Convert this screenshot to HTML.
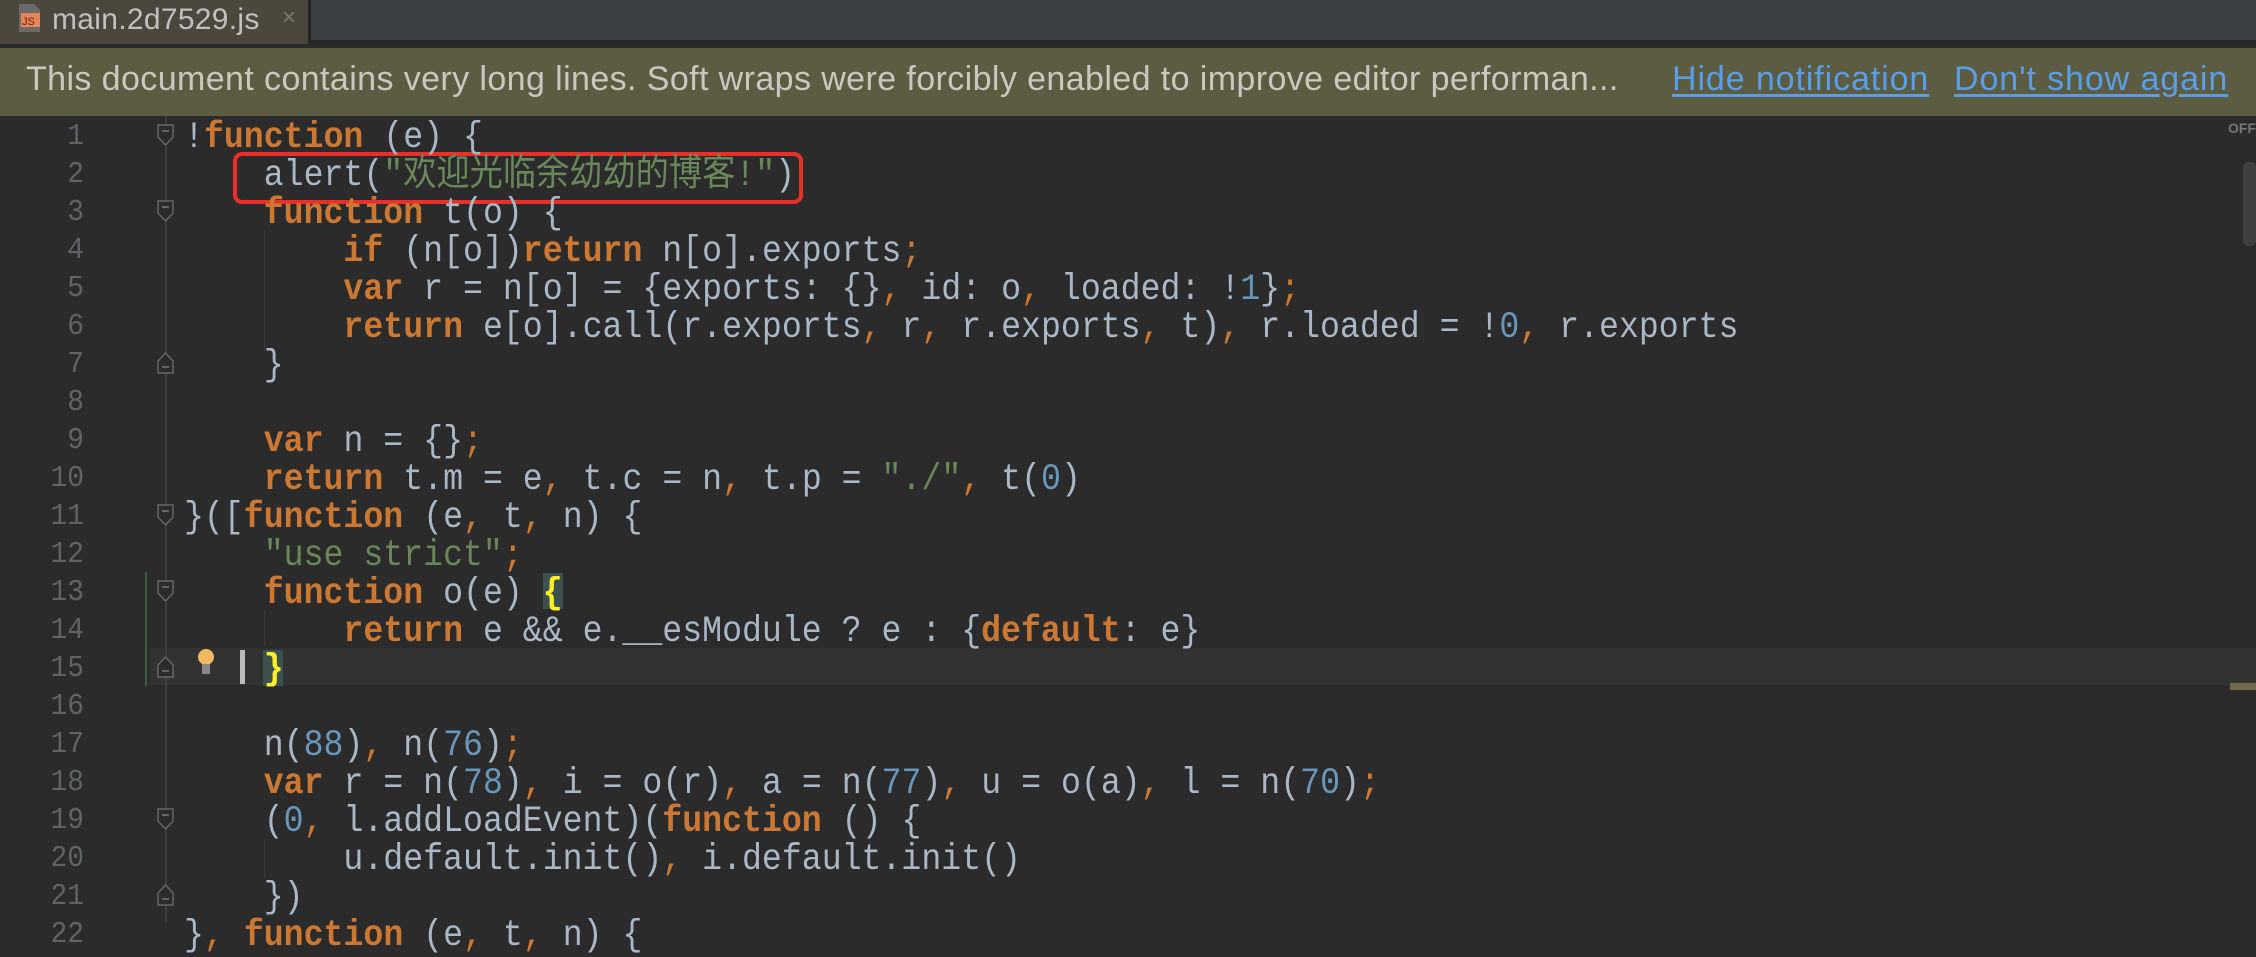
<!DOCTYPE html>
<html><head><meta charset="utf-8"><style>
*{margin:0;padding:0;box-sizing:border-box}
body{width:2256px;height:922px;overflow:hidden;background:#2b2b2b;position:relative;font-family:"Liberation Mono","Noto Sans CJK SC",monospace}
#tabbar{position:absolute;left:0;top:0;width:2256px;height:44px;background:#3c3f41;border-bottom:4px solid #262626}
#tab{position:absolute;left:0;top:0;width:311px;height:44px;background:#4b473c;border-right:3px solid #262626}
#tab .t{position:absolute;left:52px;top:3px;font:30px "Liberation Sans",sans-serif;color:#c0c0c0;letter-spacing:0.3px}
#tab .x{position:absolute;left:282px;top:4px;font:24px "Liberation Sans",sans-serif;color:#777}
#notif{position:absolute;left:0;top:48px;width:2256px;height:68px;background:#5c5c42}
#notif span{position:absolute;top:12px;font:34px "Liberation Sans",sans-serif;color:#c8c8c0;white-space:nowrap;letter-spacing:0.4px}
#notif a{color:#5a9ee8;text-decoration:underline;text-underline-offset:4px;letter-spacing:0.9px}
.ln{position:absolute;left:0;width:84px;text-align:right;color:#606366;font-size:31px;line-height:38px;transform:scaleX(0.9);transform-origin:right;margin-top:2px}
.c{position:absolute;left:184px;color:#a9b7c6;font-size:37px;line-height:38px;white-space:pre;transform:scaleX(0.8975);transform-origin:left;margin-top:3px}
.k{color:#cc7832;font-weight:bold}
.p{color:#cc7832}
.s{color:#6a8759}
.n{color:#6897bb}
.fold{position:absolute;left:157px;width:17px;height:22px}
</style></head><body>
<div id="tabbar"><div id="tab">
<svg style="position:absolute;left:18px;top:3px" width="24" height="30"><path d="M1 1h15l6 6v22H1z" fill="#6a6a6a"/><rect x="3" y="10" width="19" height="14" fill="#e8845a"/><text x="4" y="22" font-size="11" font-family="Liberation Sans" fill="#5a2a10">JS</text></svg>
<div class="t">main.2d7529.js</div><div class="x">×</div></div></div>
<div id="notif"><span style="left:26px">This document contains very long lines. Soft wraps were forcibly enabled to improve editor performan...</span><span style="left:1672px"><a>Hide notification</a></span><span style="left:1954px"><a>Don't show again</a></span></div>

<div style="position:absolute;left:2228px;top:120px;font:bold 14px 'Liberation Sans',sans-serif;color:#777">OFF</div>
<div style="position:absolute;left:2243px;top:162px;width:13px;height:84px;background:#3f3f3f;border-radius:6px"></div>
<div style="position:absolute;left:150px;top:648px;width:2106px;height:37px;background:#323232"></div>
<div style="position:absolute;left:2230px;top:683px;width:26px;height:7px;background:#736a4c"></div>
<div style="position:absolute;left:165px;top:116px;width:2px;height:806px;background:#3e3e3e"></div>
<div style="position:absolute;left:145px;top:572px;width:2px;height:114px;background:#3d5a45"></div>
<div style="position:absolute;left:264px;top:230px;width:1px;height:120px;background:#3a3a3a"></div>
<div style="position:absolute;left:264px;top:610px;width:1px;height:36px;background:#3a3a3a"></div>
<div style="position:absolute;left:264px;top:838px;width:1px;height:40px;background:#3a3a3a"></div>

<div style="position:absolute;left:233px;top:152px;width:570px;height:52px;border:4px solid #e8302a;border-radius:9px"></div>
<svg style="position:absolute;left:196px;top:648px" width="20" height="30"><circle cx="10" cy="9" r="8" fill="#f0b860"/><rect x="6" y="16" width="8" height="10" fill="#888"/></svg>
<div style="position:absolute;left:240px;top:650px;width:5px;height:34px;background:#bbb"></div>
<div style="position:absolute;left:543px;top:573px;width:20px;height:36px;background:#3b514d"></div>
<div style="position:absolute;left:263px;top:650px;width:20px;height:36px;background:#3b514d"></div>

<div class="ln" style="top:116px">1</div><div class="ln" style="top:154px">2</div><div class="ln" style="top:192px">3</div><div class="ln" style="top:230px">4</div><div class="ln" style="top:268px">5</div><div class="ln" style="top:306px">6</div><div class="ln" style="top:344px">7</div><div class="ln" style="top:382px">8</div><div class="ln" style="top:420px">9</div><div class="ln" style="top:458px">10</div><div class="ln" style="top:496px">11</div><div class="ln" style="top:534px">12</div><div class="ln" style="top:572px">13</div><div class="ln" style="top:610px">14</div><div class="ln" style="top:648px">15</div><div class="ln" style="top:686px">16</div><div class="ln" style="top:724px">17</div><div class="ln" style="top:762px">18</div><div class="ln" style="top:800px">19</div><div class="ln" style="top:838px">20</div><div class="ln" style="top:876px">21</div><div class="ln" style="top:914px">22</div>

<svg class="fold" style="top:124px"><path d="M1 1h15v12l-7.5 8L1 13z" fill="#2b2b2b" stroke="#666" stroke-width="1.5"/><path d="M5 7h7" stroke="#777" stroke-width="1.5"/></svg>
<svg class="fold" style="top:200px"><path d="M1 1h15v12l-7.5 8L1 13z" fill="#2b2b2b" stroke="#666" stroke-width="1.5"/><path d="M5 7h7" stroke="#777" stroke-width="1.5"/></svg>
<svg class="fold" style="top:504px"><path d="M1 1h15v12l-7.5 8L1 13z" fill="#2b2b2b" stroke="#666" stroke-width="1.5"/><path d="M5 7h7" stroke="#777" stroke-width="1.5"/></svg>
<svg class="fold" style="top:580px"><path d="M1 1h15v12l-7.5 8L1 13z" fill="#2b2b2b" stroke="#666" stroke-width="1.5"/><path d="M5 7h7" stroke="#777" stroke-width="1.5"/></svg>
<svg class="fold" style="top:808px"><path d="M1 1h15v12l-7.5 8L1 13z" fill="#2b2b2b" stroke="#666" stroke-width="1.5"/><path d="M5 7h7" stroke="#777" stroke-width="1.5"/></svg>
<svg class="fold" style="top:352px"><path d="M1 21h15V9L8.5 1 1 9z" fill="#2b2b2b" stroke="#666" stroke-width="1.5"/><path d="M5 15h7" stroke="#777" stroke-width="1.5"/></svg>
<svg class="fold" style="top:656px"><path d="M1 21h15V9L8.5 1 1 9z" fill="#2b2b2b" stroke="#666" stroke-width="1.5"/><path d="M5 15h7" stroke="#777" stroke-width="1.5"/></svg>
<svg class="fold" style="top:884px"><path d="M1 21h15V9L8.5 1 1 9z" fill="#2b2b2b" stroke="#666" stroke-width="1.5"/><path d="M5 15h7" stroke="#777" stroke-width="1.5"/></svg>

<div class="c" style="top:116px">!<span class="k">function</span> (e) {</div>
<div class="c" style="top:154px">    alert(<span class="s">"欢迎光临余幼幼的博客!"</span>)</div>
<div class="c" style="top:192px">    <span class="k">function</span> t(o) {</div>
<div class="c" style="top:230px">        <span class="k">if</span> (n[o])<span class="k">return</span> n[o].exports<span class="p">;</span></div>
<div class="c" style="top:268px">        <span class="k">var</span> r = n[o] = {exports: {}<span class="p">,</span> id: o<span class="p">,</span> loaded: !<span class="n">1</span>}<span class="p">;</span></div>
<div class="c" style="top:306px">        <span class="k">return</span> e[o].call(r.exports<span class="p">,</span> r<span class="p">,</span> r.exports<span class="p">,</span> t)<span class="p">,</span> r.loaded = !<span class="n">0</span><span class="p">,</span> r.exports</div>
<div class="c" style="top:344px">    }</div>
<div class="c" style="top:420px">    <span class="k">var</span> n = {}<span class="p">;</span></div>
<div class="c" style="top:458px">    <span class="k">return</span> t.m = e<span class="p">,</span> t.c = n<span class="p">,</span> t.p = <span class="s">"./"</span><span class="p">,</span> t(<span class="n">0</span>)</div>
<div class="c" style="top:496px">}([<span class="k">function</span> (e<span class="p">,</span> t<span class="p">,</span> n) {</div>
<div class="c" style="top:534px">    <span class="s">"use strict"</span><span class="p">;</span></div>
<div class="c" style="top:572px">    <span class="k">function</span> o(e) <span style="color:#ffef28;font-weight:bold">{</span></div>
<div class="c" style="top:610px">        <span class="k">return</span> e &amp;&amp; e.__esModule ? e : {<span class="k">default</span>: e}</div>
<div class="c" style="top:648px">    <span style="color:#ffef28;font-weight:bold">}</span></div>
<div class="c" style="top:724px">    n(<span class="n">88</span>)<span class="p">,</span> n(<span class="n">76</span>)<span class="p">;</span></div>
<div class="c" style="top:762px">    <span class="k">var</span> r = n(<span class="n">78</span>)<span class="p">,</span> i = o(r)<span class="p">,</span> a = n(<span class="n">77</span>)<span class="p">,</span> u = o(a)<span class="p">,</span> l = n(<span class="n">70</span>)<span class="p">;</span></div>
<div class="c" style="top:800px">    (<span class="n">0</span><span class="p">,</span> l.addLoadEvent)(<span class="k">function</span> () {</div>
<div class="c" style="top:838px">        u.default.init()<span class="p">,</span> i.default.init()</div>
<div class="c" style="top:876px">    })</div>
<div class="c" style="top:914px">}<span class="p">,</span> <span class="k">function</span> (e<span class="p">,</span> t<span class="p">,</span> n) {</div>
</body></html>
